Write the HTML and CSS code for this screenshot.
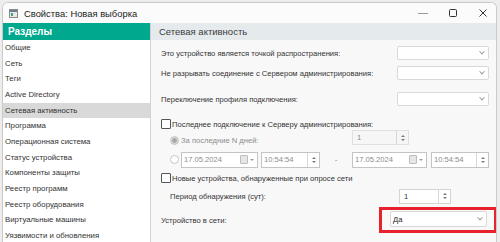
FILE: index.html
```html
<!DOCTYPE html>
<html lang="ru">
<head>
    <meta charset="UTF-8">
    <title>Свойства: Новая выборка</title>
    <link rel="stylesheet" href="styles.css">
</head>
<body>
<div class="window">
    <div class="titlebar">
        <svg class="app-icon" width="9" height="9" viewBox="0 0 9 9">
            <rect x="0.5" y="0.5" width="8" height="8" fill="#e8e8e8" stroke="#8a8a8a"/>
            <rect x="1" y="1" width="7" height="2" fill="#6d7f8c"/>
            <rect x="2" y="4" width="2" height="3" fill="#3aa57c"/>
        </svg>
        <span class="title">Свойства: Новая выборка</span>
        <div class="win-controls">
            <svg width="10" height="10" viewBox="0 0 10 10"><line x1="0" y1="5.5" x2="10" y2="5.5" stroke="#9a9a9a" stroke-width="1"/></svg>
            <svg width="10" height="10" viewBox="0 0 10 10"><rect x="1.5" y="1.5" width="7" height="7" rx="1" fill="none" stroke="#333" stroke-width="1"/></svg>
            <svg width="10" height="10" viewBox="0 0 10 10"><path d="M1.5 1.5 L8.5 8.5 M8.5 1.5 L1.5 8.5" stroke="#333" stroke-width="1"/></svg>
        </div>
    </div>
    <div class="main">
        <aside class="sections">
            <div class="sections-head">Разделы</div>
            <ul class="section-list">
                <li>Общие</li>
                <li>Сеть</li>
                <li>Теги</li>
                <li>Active Directory</li>
                <li class="selected">Сетевая активность</li>
                <li>Программа</li>
                <li>Операционная система</li>
                <li>Статус устройства</li>
                <li>Компоненты защиты</li>
                <li>Реестр программ</li>
                <li>Реестр оборудования</li>
                <li>Виртуальные машины</li>
                <li>Уязвимости и обновления</li>
            </ul>
        </aside>
        <section class="pane">
            <div class="pane-head">Сетевая активность</div>
            <div class="pane-body">
                <div class="row r1">
                    <span class="label">Это устройство является точкой распространения:</span>
                    <div class="select"><span></span><i class="chev"></i></div>
                </div>
                <div class="row r2">
                    <span class="label">Не разрывать соединение с Сервером администрирования:</span>
                    <div class="select"><span></span><i class="chev"></i></div>
                </div>
                <div class="row r3">
                    <span class="label">Переключение профиля подключения:</span>
                    <div class="select"><span></span><i class="chev"></i></div>
                </div>
                <div class="row r4">
                    <span class="checkbox"></span>
                    <span class="label">Последнее подключение к Серверу администрирования:</span>
                </div>
                <div class="row r5 disabled">
                    <span class="radio checked"></span>
                    <span class="label">За последние N дней:</span>
                    <div class="spin spin-days"><span class="spin-val">1</span><span class="spin-btns"><i class="up"></i><i class="down"></i></span></div>
                </div>
                <div class="row r6 disabled">
                    <span class="radio"></span>
                    <div class="date"><span class="date-val">17.05.2024</span><i class="cal"></i><i class="caret"></i></div>
                    <div class="spin time"><span class="spin-val">10:54:54</span><span class="spin-btns"><i class="up"></i><i class="down"></i></span></div>
                    <span class="dash">-</span>
                    <div class="date date2"><span class="date-val">17.05.2024</span><i class="cal"></i><i class="caret"></i></div>
                    <div class="spin time time2"><span class="spin-val">10:54:54</span><span class="spin-btns"><i class="up"></i><i class="down"></i></span></div>
                </div>
                <div class="row r7">
                    <span class="checkbox"></span>
                    <span class="label">Новые устройства, обнаруженные при опросе сети</span>
                </div>
                <div class="row r8">
                    <span class="label indent">Период обнаружения (сут):</span>
                    <div class="spin spin-period"><span class="spin-val">1</span><span class="spin-btns"><i class="up"></i><i class="down"></i></span></div>
                </div>
                <div class="row r9">
                    <span class="label">Устройство в сети:</span>
                    <div class="highlight">
                        <div class="select select-wide"><span>Да</span><i class="chev"></i></div>
                    </div>
                </div>
            </div>
        </section>
    </div>
</div>
</body>
</html>
```

FILE: styles.css
```css
body {
    margin: 0;
    padding: 2px 0 0 2px;
    background-color: #ededed;
    font-family: "Liberation Sans", Arial, sans-serif;
    font-size: 7.6px;
    color: #333;
    overflow: hidden;
    height: 240px;
}
.window {
    width: 493px;
    height: 240px;
    background-color: #fff;
    border: 1px solid #c9c9c9;
    border-bottom: none;
    border-radius: 6px 6px 0 0;
    overflow: hidden;
    display: flex;
    flex-direction: column;
}
.titlebar {
    height: 20px;
    flex: none;
    display: flex;
    align-items: center;
    padding-left: 6px;
    background-color: #fbfbfb;
}
.app-icon {
    margin-right: 6px;
}
.title {
    font-size: 9.4px;
    color: #1c1c1c;
}
.win-controls {
    margin-left: auto;
    display: flex;
    gap: 20px;
    padding-right: 8px;
}
.main {
    flex: 1;
    display: flex;
}
.sections {
    width: 147px;
    flex: none;
    border-right: 1px solid #d4d4d4;
    background-color: #fff;
}
.sections-head {
    height: 17px;
    background-color: #00a88e;
    color: #fff;
    font-weight: bold;
    font-size: 10px;
    line-height: 17px;
    padding-left: 5px;
}
.section-list {
    list-style: none;
    margin: 0;
    padding: 0;
}
.section-list li {
    height: 15.67px;
    line-height: 15.67px;
    padding-left: 2px;
    font-size: 7.8px;
    color: #333;
    white-space: nowrap;
}
.section-list li.selected {
    background-color: #d9d9d9;
}
.pane {
    flex: 1;
    background-color: #f8f8f8;
}
.pane-head {
    height: 17px;
    line-height: 17px;
    background-color: #e5eaed;
    color: #3a3a3a;
    font-size: 9.5px;
    padding-left: 8px;
}
.pane-body {
    padding: 0 8px 0 10px;
}
.row {
    display: flex;
    align-items: center;
    white-space: nowrap;
}
.row .select,
.row .highlight {
    margin-left: auto;
}
.r1 { margin-top: 3px; height: 20px; }
.r2 { height: 20px; }
.r3 { margin-top: 6px; height: 20px; }
.r4 { margin-top: 7px; height: 16px; }
.r5 { height: 16px; }
.r6 { margin-top: 3px; height: 17px; }
.r7 { margin-top: 3px; height: 14px; }
.r8 { margin-top: 3px; height: 16px; }
.r9 { margin-top: 3px; height: 26px; }
.indent {
    margin-left: 9px;
}
.disabled .label,
.disabled .spin-val,
.disabled .date-val,
.disabled .dash {
    color: #8c8c8c;
}
.select {
    width: 88px;
    height: 12px;
    border: 1px solid #d8d8d8;
    border-radius: 2px;
    background-color: #fff;
    display: flex;
    align-items: center;
    padding-left: 2px;
}
.select-wide {
    width: 93px;
    height: 14px;
    color: #222;
}
.chev {
    margin-left: auto;
    margin-right: 4px;
    width: 3px;
    height: 3px;
    border-right: 1px solid #9a9a9a;
    border-bottom: 1px solid #9a9a9a;
    transform: rotate(45deg) translate(-1px, -1px);
}
.highlight {
    border: 3px solid #e8212b;
    padding: 1px 7px 3px 8px;
    margin-right: -8px;
}
.checkbox {
    width: 8px;
    height: 8px;
    border: 1px solid #555;
    border-radius: 1px;
    background-color: #fff;
    margin-right: 1px;
}
.radio {
    width: 7px;
    height: 7px;
    border: 1px solid #c6c6c6;
    border-radius: 50%;
    background-color: #fff;
    margin-left: 9px;
    margin-right: 2px;
    box-sizing: content-box;
}
.radio.checked {
    background: radial-gradient(circle, #a8a8a8 0 2px, #d8d8d8 2.5px);
}
.spin {
    display: flex;
    height: 13px;
    border: 1px solid #d4d4d4;
    background-color: #fff;
}
.spin-val {
    flex: 1;
    padding-left: 4px;
    line-height: 13px;
}
.spin-btns {
    width: 11px;
    border-left: 1px solid #d8d8d8;
    display: flex;
    flex-direction: column;
    justify-content: center;
    align-items: center;
    gap: 2px;
}
.spin-btns i {
    width: 0;
    height: 0;
    border-left: 2px solid transparent;
    border-right: 2px solid transparent;
}
.spin-btns .up {
    border-bottom: 2px solid #7a7a7a;
}
.spin-btns .down {
    border-top: 2px solid #7a7a7a;
}
.spin-days {
    margin-left: auto;
    margin-right: 80px;
    width: 55px;
    margin-top: -5px;
    background-color: #f6f6f6;
    border-color: #e0e0e0;
}
.spin-period {
    margin-left: auto;
    margin-right: 38px;
    width: 50px;
    height: 13px;
}
.date {
    border: 1px solid #c4c4c4;
    background-color: #fff;
    display: flex;
    align-items: center;
    padding-left: 2px;
    box-sizing: border-box;
    width: 77px;
    height: 16px;
}
.date-val {
    flex: 1;
}
.cal {
    width: 6px;
    height: 7px;
    border: 1px solid #bdbdbd;
    border-radius: 1px;
    background-color: #e6e6e6;
}
.caret {
    width: 0;
    height: 0;
    border-left: 2px solid transparent;
    border-right: 2px solid transparent;
    border-top: 2px solid #9a9a9a;
    margin: 0 3px 0 2px;
}
.time {
    width: 59px;
    height: 16px;
    box-sizing: border-box;
    border-color: #c4c4c4;
    margin-left: 3px;
}
.time .spin-val {
    line-height: 14px;
    padding-left: 2px;
}
.dash {
    width: 32px;
    text-align: center;
}
.date2 {
    width: 75px;
}
.time2 {
    width: 58px;
    margin-left: 4px;
}
```
